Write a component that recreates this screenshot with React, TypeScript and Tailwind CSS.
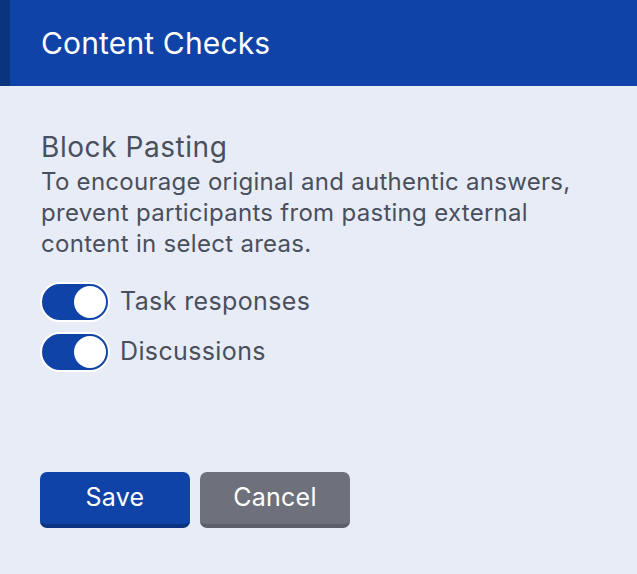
import { useState } from 'react';

function Toggle({ on, onChange }: { on: boolean; onChange: () => void }) {
  return (
    <button
      onClick={onChange}
      className={`relative w-[70px] h-[40px] rounded-full border-2 border-white flex items-center px-[2px] ${
        on ? 'bg-[#1043a8] justify-end' : 'bg-gray-400 justify-start'
      }`}
    >
      <span className="w-[32px] h-[32px] rounded-full bg-white" />
    </button>
  );
}

export default function App() {
  const [task, setTask] = useState(true);
  const [disc, setDisc] = useState(true);

  return (
    <div
      className="w-[637px] h-[574px] bg-[#e8ecf7] flex flex-col"
      style={{ fontFamily: 'Inter, "Noto Sans", sans-serif' }}
    >
      <div className="h-[86px] bg-[#1043a8] border-l-[10px] border-[#0b347f] flex items-center pl-[31px]">
        <h1 className="text-[30px] text-white font-normal tracking-[0.005em]">Content Checks</h1>
      </div>

      <div className="px-[41px] pt-[42px] flex flex-col text-[#4a4f5c]">
        <h2 className="text-[28px] leading-[38px] tracking-[0.02em]">Block Pasting</h2>
        <p className="text-[24px] leading-[31px] tracking-[0.012em] w-[560px]">
          To encourage original and authentic answers, prevent participants from pasting external
          content in select areas.
        </p>

        <div className="flex flex-col gap-[10px] mt-[23px] -ml-[1px]">
          <label className="flex items-center gap-[10px]">
            <Toggle on={task} onChange={() => setTask(!task)} />
            <span className="text-[25px] tracking-[0.015em]">Task responses</span>
          </label>
          <label className="flex items-center gap-[10px]">
            <Toggle on={disc} onChange={() => setDisc(!disc)} />
            <span className="text-[25px] tracking-[0.015em]">Discussions</span>
          </label>
        </div>

        <div className="flex gap-[10px] mt-[100px] -ml-[1px]">
          <button className="w-[150px] h-[56px] rounded-[7px] bg-[#1043a8] border-b-[4px] border-[#0b347f] text-white text-[25px] tracking-[0.01em]">
            Save
          </button>
          <button className="w-[150px] h-[56px] rounded-[7px] bg-[#6e717b] border-b-[4px] border-[#5d6069] text-white text-[25px] tracking-[0.01em]">
            Cancel
          </button>
        </div>
      </div>
    </div>
  );
}
